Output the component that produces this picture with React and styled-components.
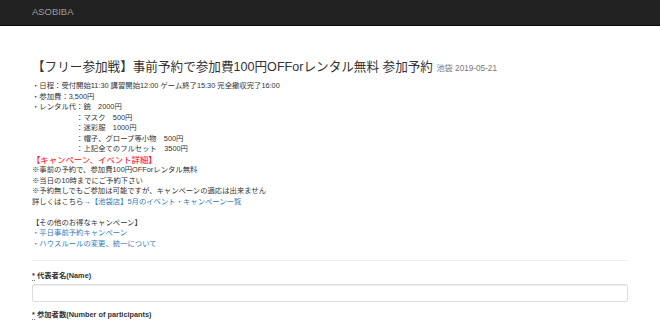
import React from 'react';
import styled, { createGlobalStyle } from 'styled-components';

const GlobalStyle = createGlobalStyle`
    html, body{
        margin: 0;
        padding: 0;
        background: #fff;
    }
    body{
        font-family: "Liberation Sans", "Noto Sans CJK JP", sans-serif;
        font-size: 7.35px;
        line-height: 10.5px;
        color: #333;
    }
    *{
        box-sizing: border-box;
    }
`;

const rental = [
    'マスク　500円',
    '迷彩服　1000円',
    '帽子、グローブ等小物　500円',
    '上記全てのフルセット　3500円',
];

export default function App(){
    return (
        <>
            <GlobalStyle />
            <Navbar>
                <Brand>ASOBIBA</Brand>
            </Navbar>
            <Container>
                <Title>
                    【フリー参加戦】事前予約で参加費100円OFForレンタル無料 参加予約 <small>池袋 2019-05-21</small>
                </Title>
                <Body>
                    <Line>・日程：受付開始11:30 講習開始12:00 ゲーム終了15:30 完全撤収完了16:00</Line>
                    <Line>・参加費：3,500円</Line>
                    <Line>・レンタル代：銃　2000円</Line>
                    {rental.map(item => (
                        <Line indent key={item}>：{item}</Line>
                    ))}
                    <Campaign>【キャンペーン、イベント詳細】</Campaign>
                    <Line>※事前の予約で、参加費100円OFForレンタル無料</Line>
                    <Line>※当日の10時までにご予約下さい</Line>
                    <Line>※予約無しでもご参加は可能ですが、キャンペーンの適応は出来ません</Line>
                    <Line>詳しくはこちら→<Link>【池袋店】5月のイベント・キャンペーン一覧</Link></Line>
                    <Line>&nbsp;</Line>
                    <Line>【その他のお得なキャンペーン】</Line>
                    <Line><Link>・平日事前予約キャンペーン</Link></Line>
                    <Line><Link>・ハウスルールの変更、統一について</Link></Line>
                </Body>
                <Rule />
                <FormGroup>
                    <Label><Req title="required">*</Req> 代表者名(Name)</Label>
                    <Input type="text" />
                </FormGroup>
                <FormGroup>
                    <Label><Req title="required">*</Req> 参加者数(Number of participants)</Label>
                </FormGroup>
            </Container>
        </>
    );
}

const Navbar = styled.div`
    height: 26px;
    background-color: #222;
    border-bottom: 1px solid #080808;
    display: flex;
    align-items: center;
    padding: 0 32px;
`;
const Brand = styled.span`
    color: #9d9d9d;
    font-size: 9.45px;
`;
const Container = styled.div`
    padding: 34px 32px 0 32px;
`;
const Title = styled.h3`
    margin: 0 0 5px 0;
    font-size: 12.6px;
    line-height: 14px;
    font-weight: normal;
    color: #333;
    small{
        font-size: 8.2px;
        color: #777;
        font-weight: normal;
    }
`;
const Body = styled.div`
    display: flex;
    flex-direction: column;
`;
const Line = styled.div`
    height: 10.5px;
    white-space: nowrap;
    padding-left: ${props => props.indent ? '6em' : '0'};
`;
const Campaign = styled.div`
    height: 10.5px;
    line-height: 10.5px;
    font-size: 8.4px;
    color: #f00;
    white-space: nowrap;
`;
const Link = styled.a`
    color: #337ab7;
    text-decoration: none;
`;
const Rule = styled.hr`
    margin: 10.5px 0;
    border: 0;
    border-top: 1px solid #eee;
`;
const FormGroup = styled.div`
    margin-bottom: 7.9px;
`;
const Label = styled.label`
    display: block;
    font-weight: bold;
    margin-bottom: 2.6px;
`;
const Req = styled.abbr`
    border-bottom: 1px dotted #777;
    text-decoration: none;
    cursor: help;
`;
const Input = styled.input`
    display: block;
    width: 100%;
    height: 17.9px;
    padding: 3px 6px;
    font-size: 7.35px;
    border: 1px solid #ddd;
    border-radius: 2px;
    box-shadow: inset 0 1px 1px rgba(0,0,0,.075);
    outline: none;
`;
